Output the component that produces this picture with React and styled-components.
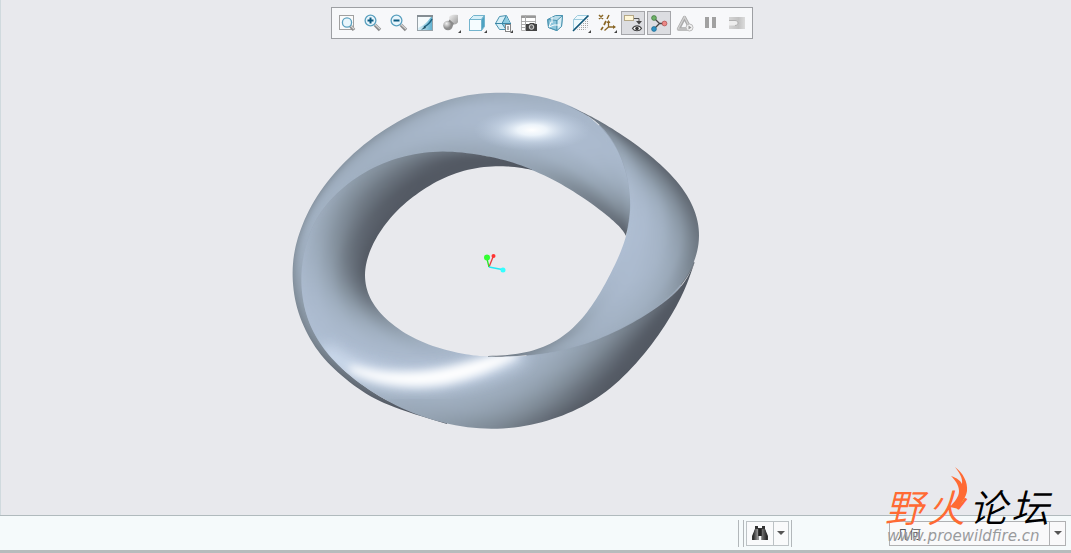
import React from "react";
import styled, { createGlobalStyle, css } from "styled-components";

const GlobalStyle = createGlobalStyle`
  * { box-sizing: border-box; }
  body {
    margin: 0;
    background: #e8eaee;
    font-family: "Liberation Sans", "Noto Sans CJK SC", sans-serif;
  }
`;

const Page = styled.div`
  position: relative;
  display: flex;
  flex-direction: column;
  min-height: 100vh;
  overflow: hidden;
`;

const Viewport = styled.main`
  flex: 1;
  display: flex;
  flex-direction: column;
  align-items: center;
  padding-top: 7px;
  border-left: 1px solid #d0dade;
  background: #e8e9ed;
`;

const Toolbar = styled.div`
  display: flex;
  gap: 2px;
  margin-left: 12px;
  padding: 3px;
  border: 1px solid #9d9fa3;
  background: #f7f8fa;
`;

const ToolButton = styled.button`
  display: block;
  width: 24px;
  height: 24px;
  padding: 0;
  border: 0;
  background: transparent;
  ${(p) =>
    p.$active &&
    css`
      background: #dcdde1;
      box-shadow: inset 0 0 0 1px #a5a6aa;
    `}
  svg { display: block; }
`;

const Scene = styled.svg`
  display: block;
  width: 100%;
  flex: 1;
  min-height: 0;
`;

const StatusBar = styled.footer`
  display: flex;
  align-items: center;
  justify-content: flex-end;
  height: 38px;
  padding: 0 5px 0 0;
  border-top: 1px solid #b0babd;
  border-bottom: 3px solid #b7bbbc;
  background: #f5fafb;
`;

const Divider = styled.span`
  width: 1px;
  height: 27px;
  margin-right: ${(p) => p.$gap || 2}px;
  background: #b2b7ba;
`;

const FindGroup = styled.div`
  display: flex;
  height: 25px;
  margin-right: 2px;
  border: 1px solid #bcc2c5;
  background: #f9fafb;
`;

const FindButton = styled.button`
  display: flex;
  align-items: center;
  justify-content: center;
  width: ${(p) => p.$width}px;
  padding: 0;
  border: 0;
  border-left: ${(p) => (p.$split ? "1px solid #bcc2c5" : "0")};
  background: transparent;
`;

const FilterBox = styled.div`
  display: flex;
  align-items: center;
  position: relative;
  width: 177px;
  height: 25px;
  margin-left: 95px;
  border: 1px solid #b0b1b3;
  background: #f9f9fa;
`;

const FilterSelect = styled.select`
  appearance: none;
  width: 100%;
  height: 23px;
  padding: 0 24px 0 7px;
  border: 0;
  background: transparent;
  color: #555;
  font: 12px "Noto Sans CJK SC", sans-serif;
`;

const FilterArrow = styled.span`
  position: absolute;
  top: 0;
  right: 0;
  display: flex;
  align-items: center;
  justify-content: center;
  width: 16px;
  height: 23px;
  border-left: 1px solid #b0b1b3;
  pointer-events: none;
`;

const Watermark = styled.div`
  position: absolute;
  right: 18px;
  bottom: 7px;
  width: 168px;
  pointer-events: none;
`;

const Brand = styled.div`
  display: flex;
  gap: 4px;
  color: #000;
  font: italic 350 38px/40px "Noto Sans CJK SC", sans-serif;
`;

const BrandFire = styled.span`
  position: relative;
  color: #ff6a33;
`;

const Flame = styled.svg`
  position: absolute;
  right: -3px;
  top: -19px;
  width: 18px;
  height: 43px;
`;

const SiteName = styled.div`
  margin-left: 2px;
  color: #999b9d;
  font: italic 15px/20px "DejaVu Sans", sans-serif;
`;

/* ---------- toolbar icons, each on a 24 x 24 grid ---------- */

const Corner = () => <path d="M22 19v3h-3z" fill="#444" />;

const Lens = ({ cx, cy, r, sign }) => (
  <>
    <path d={`M${cx + r - 1} ${cy + r - 1}L19 19`} stroke="#8b8b8b" strokeWidth="3.4" />
    <path d={`M${cx + r - 1} ${cy + r - 1.6}L19 18`} stroke="#d4d4d4" strokeWidth="1.2" />
    <circle cx={cx} cy={cy} r={r} fill="#e9f6fc" stroke="#5aa0bf" strokeWidth="1.3" />
    {sign && (
      <path
        d={sign === "+" ? `M${cx - 3} ${cy}h6M${cx} ${cy - 3}v6` : `M${cx - 3} ${cy}h6`}
        stroke="#0c5a80"
        strokeWidth="2"
      />
    )}
  </>
);

const icons = {
  refit: (
    <>
      <rect x="4.5" y="4.5" width="14" height="14" fill="#fbfbfb" stroke="#a0a0a0" />
      <Lens cx={12} cy={11.5} r={4.6} />
    </>
  ),
  zoomIn: <Lens cx={9.5} cy={9.5} r={5.4} sign="+" />,
  zoomOut: <Lens cx={9.5} cy={9.5} r={5.4} sign="-" />,
  repaint: (
    <>
      <rect x="4.5" y="4.5" width="15" height="15" fill="url(#teal)" stroke="#98a2a8" />
      <path d="M5 6h13C14 11 12 14 5 17z" fill="#f4fafc" />
      <path d="M4 5h16" stroke="#858d93" strokeWidth="2" />
      <path d="M19 8c-2 4-4 6-8 8" fill="none" stroke="#1d6483" strokeWidth="1.6" />
      <path d="M12 15l-4 4 5-2z" fill="#245468" />
    </>
  ),
  shading: (
    <>
      <path d="M10 6c2-3 7-2 9-2v7c-1 3-5 3-8 1z" fill="url(#metal)" />
      <circle cx="9" cy="14.5" r="4.8" fill="url(#ball)" />
      <path d="M10.500 8.500l4.500 4-1.500 3c0-2-1.500-4-4-5z" fill="#8a8a8a" />
      <Corner />
    </>
  ),
  views: (
    <>
      <path d="M4.5 8.5l4-4h11l-3 4z" fill="#d7f0f9" stroke="#74b4cd" />
      <path d="M16.5 8.5l3-4v11l-3 4z" fill="#4da2c2" stroke="#74b4cd" />
      <rect x="4.5" y="8.5" width="12" height="11" fill="#f5fcff" stroke="#74b4cd" />
      <Corner />
    </>
  ),
  manager: (
    <>
      <path d="M4.5 12.5l4-7 7-1 4 8-4 6h-7z" fill="#d6eff7" stroke="#4a93b0" />
      <path d="M15 5l-4 7 4 6 4-6z" fill="#8ccbe0" />
      <path d="M4 12.5h16M15 5l-4 7.500l4 6" fill="none" stroke="#3a86a6" />
      <rect x="14.500" y="13.500" width="5" height="7" fill="#fff" stroke="#858585" />
      <path d="M16 16h2M16 18h2" stroke="#555" />
      <Corner />
    </>
  ),
  capture: (
    <>
      <path d="M4.500 4.500h14v15h-14z" fill="#fff" stroke="#b5b5b5" />
      <path d="M4 5h15v2H4z" fill="#999" />
      <path d="M4 10.500h15M4 13.500h7M4 16.500h5M8.500 4v16" stroke="#aaa" />
      <path d="M9 13h3l1-1h4l1 1h2v7H9z" fill="#444" />
      <circle cx="14.500" cy="16" r="2.300" fill="#666" stroke="#ddd" />
    </>
  ),
  perspective: (
    <>
      <path d="M4.500 8.500l8-4h7l-1 11-5 4-8-3z" fill="#b9dce9" stroke="#4b94b1" />
      <path d="M5 8.500l9 1v10l-8.500-3z" fill="#8dc6dc" stroke="#4b94b1" />
      <path d="M14 9.500l5.500-5-1 11-4.500 4z" fill="#d9eff6" stroke="#4b94b1" />
      <path d="M8 11l-2 5 5-2h6M9 6v6" fill="none" stroke="#fff" />
    </>
  ),
  section: (
    <>
      <path d="M4.500 18.500v-10l4-4h10l-14 14z" fill="#edf9fd" stroke="#9fcbdd" />
      <path d="M4.500 8.500h10l4-4" fill="none" stroke="#9fcbdd" />
      <path d="M19 7v9l-4 4H7z" fill="url(#dots)" />
      <path d="M4 20L19.500 4.500" stroke="#135676" strokeWidth="1.600" />
      <Corner />
    </>
  ),
  datum: (
    <>
      <path d="M4 4l4 4M8 4l-4 4M14 4l-2 4" stroke="#8a6727" strokeWidth="1.500" />
      <path d="M11 10l-2 4M8 16l-2 3" stroke="#8a6727" strokeWidth="1.700" />
      <path d="M13.500 10v6h6M13.500 16l-4 3.500" fill="none" stroke="#8a6727" strokeWidth="1.300" />
      <path d="M11.500 12l2-3 2 3zM18 14l3 2-3 2z" fill="#8a6727" />
      <Corner />
    </>
  ),
  annotation: (
    <>
      <rect x="3.500" y="4.500" width="9" height="5" fill="#fff7d8" stroke="#b5a886" />
      <path d="M13 7.500h5v3" fill="none" stroke="#555" />
      <path d="M15 10h6l-3 3.500z" fill="#444" />
      <path d="M11.500 17.500c2-3.500 7-3.500 9 0-2 3-7 3-9 0z" fill="#fff" stroke="#444" strokeWidth="1.200" />
      <circle cx="16" cy="17.500" r="1.800" fill="#333" />
    </>
  ),
  spin: (
    <>
      <path d="M7 7l5.500 5.500L7 18M12.500 12.500H17" fill="none" stroke="#444" strokeWidth="1.300" />
      <circle cx="7" cy="7" r="2.400" fill="#6fb268" stroke="#39733a" strokeWidth=".7" />
      <circle cx="17.500" cy="12.500" r="2.400" fill="#ec8785" stroke="#a94b4b" strokeWidth=".7" />
      <circle cx="7" cy="18" r="2.400" fill="#2f93c4" stroke="#17648c" strokeWidth=".7" />
    </>
  ),
  simulate: (
    <>
      <path d="M11.500 6.500l6 11.500H5.500z" fill="none" stroke="#aaa" strokeWidth="3.400" strokeLinejoin="round" />
      <path d="M11.500 6l6 12H5z" fill="none" stroke="#d2d2d2" strokeWidth="1.200" />
      <circle cx="16.500" cy="16.500" r="3.500" fill="#f1f1f1" stroke="#bbb" />
      <path d="M15.500 14.500l3 2-3 2z" fill="#999" />
    </>
  ),
  pause: <path d="M6 6h4v11H6zM13 6h4v11h-4z" fill="#a1a1a1" />,
  resume: (
    <>
      <rect x="4" y="6" width="16" height="12" fill="url(#metalLight)" />
      <path d="M4 9.500h6c4 0 4 5 0 5H4z" fill="#eee" />
      <path d="M4 9.500h6c4 0 4 5 0 5" fill="none" stroke="#b0b0b0" />
    </>
  ),
};

const tools = [
  ["refit", "Refit"],
  ["zoomIn", "Zoom in"],
  ["zoomOut", "Zoom out"],
  ["repaint", "Repaint"],
  ["shading", "Display style"],
  ["views", "Saved orientations"],
  ["manager", "View manager"],
  ["capture", "Capture"],
  ["perspective", "Perspective"],
  ["section", "Section"],
  ["datum", "Datum display"],
  ["annotation", "Annotation display", true],
  ["spin", "Spin center", true],
  ["simulate", "Simulate"],
  ["pause", "Pause"],
  ["resume", "Resume"],
];

const PaintDefs = styled.svg`
  position: absolute;
`;

const IconPaints = () => (
  <PaintDefs width="0" height="0" aria-hidden="true">
    <defs>
      <linearGradient id="teal"><stop offset="0" stopColor="#e3f4fa" /><stop offset="1" stopColor="#5db0cf" /></linearGradient>
      <linearGradient id="metal" x2="1" y2="1"><stop offset="0" stopColor="#f2f2f2" /><stop offset="1" stopColor="#999" /></linearGradient>
      <linearGradient id="metalLight"><stop offset="0" stopColor="#d5d5d5" /><stop offset=".6" stopColor="#c2c2c2" /><stop offset="1" stopColor="#dcdcdc" /></linearGradient>
      <radialGradient id="ball" cx=".35" cy=".3"><stop offset="0" stopColor="#f2f2f2" /><stop offset="1" stopColor="#8d8d8d" /></radialGradient>
      <linearGradient id="barrel"><stop offset="0" stopColor="#222" /><stop offset=".4" stopColor="#aaa" /><stop offset="1" stopColor="#222" /></linearGradient>
      <pattern id="dots" width="2" height="2" patternUnits="userSpaceOnUse"><rect width="1" height="1" fill="#a5a5a5" /></pattern>
    </defs>
  </PaintDefs>
);

/* ---------- shaded ring ----------
   Each surface is a list of stations along the ring:
   [edge A x, y, edge B x, y, shade at five places from A to B].
   Shade 0 is the darkest tone and 1 the lit body tone. */

const topSurface = [
  [447, 424, 447, 423, 0, 0, 0, 0, 0],
  [397, 409, 400, 407, 0, 0, 0, 0, 0],
  [370, 397, 378, 396, 0, 0.1, 0.1, 0.2, 0.2],
  [346, 380, 354, 379, 0.1, 0.2, 0.3, 0.3, 0.4],
  [323, 359, 331, 359, 0.3, 0.35, 0.4, 0.45, 0.5],
  [307, 335, 315, 337, 0.4, 0.5, 0.55, 0.6, 0.6],
  [296, 308, 305, 313, 0.45, 0.55, 0.6, 0.65, 0.7],
  [292, 281, 301, 286, 0.5, 0.65, 0.7, 0.75, 0.8],
  [293, 255, 303, 259, 0.5, 0.7, 0.8, 0.85, 0.88],
  [300, 229, 309, 232, 0.5, 0.75, 0.85, 0.88, 0.9],
  [313, 201, 323, 207, 0.5, 0.75, 0.87, 0.9, 0.9],
  [334, 172, 344, 186, 0.55, 0.8, 0.87, 0.9, 0.9],
  [363, 144, 369, 169, 0.6, 0.83, 0.88, 0.9, 0.88],
  [397, 121, 396, 158, 0.65, 0.85, 0.92, 0.92, 0.87],
  [433, 104, 424, 152, 0.75, 0.92, 0.96, 0.93, 0.85],
  [468, 94, 452, 151, 0.8, 0.97, 0.98, 0.93, 0.82],
  [502, 92, 483, 155, 0.85, 0.98, 1, 0.93, 0.8],
  [530, 94, 514, 163, 0.87, 0.98, 1, 0.94, 0.8],
  [556, 100, 545, 175, 0.9, 1, 1, 0.92, 0.72],
  [581, 110, 570, 189, 0.94, 1, 1, 0.87, 0.55],
  [602, 127, 591, 203, 0.96, 1, 0.97, 0.8, 0.4],
  [619, 150, 608, 216, 1, 0.97, 0.88, 0.7, 0.3],
  [629, 181, 619, 226, 0.98, 0.88, 0.75, 0.55, 0.2],
  [631, 210, 624, 232, 0.75, 0.65, 0.5, 0.3, 0.1],
  [626, 236, 626, 236, 0.2, 0.2, 0.1, 0.1, 0.1],
];

const rightSurface = [
  [566, 105, 566, 105, 0.2, 0.2, 0.2, 0.2, 0.2],
  [585, 113, 584, 113, 0.2, 0.2, 0.2, 0.3, 0.3],
  [605, 124, 600, 124, 0.1, 0.2, 0.3, 0.4, 0.5],
  [627, 138, 613, 140, 0.1, 0.3, 0.45, 0.6, 0.7],
  [650, 155, 623, 160, 0.1, 0.35, 0.55, 0.75, 0.88],
  [671, 174, 629, 184, 0.1, 0.45, 0.7, 0.88, 1],
  [688, 195, 631, 208, 0.12, 0.55, 0.85, 0.98, 1.02],
  [698, 218, 628, 231, 0.2, 0.65, 0.9, 1, 1.03],
  [700, 240, 621, 252, 0.3, 0.73, 0.93, 1, 1.03],
  [695, 262, 612, 271, 0.4, 0.8, 0.95, 1, 1],
  [682, 285, 602, 290, 0.62, 0.85, 0.95, 1, 0.95],
  [659, 306, 590, 309, 0.8, 0.9, 0.94, 0.95, 0.88],
  [630, 324, 575, 327, 0.87, 0.9, 0.93, 0.9, 0.75],
  [598, 340, 557, 341, 0.88, 0.9, 0.88, 0.8, 0.65],
  [563, 351, 537, 350, 0.85, 0.83, 0.8, 0.7, 0.5],
  [527, 356, 514, 355, 0.65, 0.6, 0.55, 0.5, 0.4],
  [488, 357, 488, 356, 0.3, 0.3, 0.3, 0.3, 0.3],
];

const innerSurface = [
  [533, 170, 533, 170, 0, 0, 0, 0, 0],
  [510, 161, 511, 166, 0, 0, 0, 0, 0],
  [482, 155, 488, 166, 0.15, 0.05, 0, 0, 0],
  [452, 151, 464, 170, 0.4, 0.15, 0, 0, 0],
  [424, 152, 440, 179, 0.5, 0.25, 0.05, 0, 0],
  [396, 158, 419, 192, 0.6, 0.4, 0.18, 0, 0],
  [369, 169, 400, 207, 0.68, 0.5, 0.27, 0.05, 0],
  [344, 186, 385, 224, 0.77, 0.57, 0.35, 0.1, 0],
  [323, 207, 374, 241, 0.86, 0.68, 0.48, 0.18, 0],
  [309, 232, 367, 258, 0.9, 0.77, 0.57, 0.25, 0],
  [301, 264, 364, 275, 0.96, 0.88, 0.7, 0.38, 0.03],
  [301, 293, 367, 293, 1, 0.95, 0.82, 0.57, 0.22],
  [307, 320, 376, 309, 1.02, 0.99, 0.91, 0.75, 0.48],
  [320, 345, 391, 324, 1.03, 1, 0.97, 0.88, 0.68],
  [341, 369, 412, 338, 1.02, 1.01, 1, 0.95, 0.83],
  [368, 390, 437, 348, 0.9, 1, 1, 1, 0.92],
  [401, 409, 462, 354, 0.83, 0.9, 1, 1, 0.97],
  [437, 422, 485, 357, 0.75, 0.85, 0.92, 1, 1],
  [474, 429, 506, 357, 0.6, 0.77, 0.87, 0.94, 1],
  [509, 429, 530, 356, 0.45, 0.66, 0.8, 0.88, 0.93],
  [542, 423, 555, 352, 0.22, 0.5, 0.68, 0.8, 0.86],
  [573, 412, 581, 346, 0, 0.28, 0.5, 0.67, 0.77],
  [602, 396, 607, 336, 0, 0.05, 0.28, 0.48, 0.63],
  [628, 373, 633, 323, 0, 0, 0.06, 0.26, 0.45],
  [652, 345, 657, 308, 0, 0, 0, 0.06, 0.24],
  [672, 315, 676, 293, 0, 0, 0, 0, 0.08],
  [686, 288, 688, 278, 0, 0, 0, 0, 0],
  [695, 261, 695, 261, 0, 0, 0, 0, 0],
];

const tones = [
  [0, 84, 90, 100],
  [0.4, 113, 123, 134],
  [0.65, 136, 149, 162],
  [0.88, 160, 175, 192],
  [1, 172, 187, 207],
  [1.1, 181, 198, 219],
];

function toneAt(v) {
  const s = Math.max(0, Math.min(1.1, v));
  let i = 1;
  while (i < tones.length - 1 && s > tones[i][0]) i++;
  const [a, b] = [tones[i - 1], tones[i]];
  const t = (s - a[0]) / (b[0] - a[0]);
  return `rgb(${[1, 2, 3].map((k) => Math.round(a[k] + (b[k] - a[k]) * t)).join()})`;
}

/* Uniform cubic B-spline through a run of four control values. */
function spline(p0, p1, p2, p3, t) {
  const s = 1 - t;
  return (
    (s * s * s * p0 +
      (3 * t * t * t - 6 * t * t + 4) * p1 +
      (3 * s * s * s - 6 * s * s + 4) * p2 +
      t * t * t * p3) / 6
  );
}

function smooth(stations, steps) {
  const last = stations.length - 1;
  const mirror = (a, b) => a.map((v, k) => 2 * v - b[k]);
  const at = (i) => {
    if (i < 0) return mirror(stations[0], stations[1]);
    if (i > last) return mirror(stations[last], stations[last - 1]);
    return stations[i];
  };
  const rows = [];
  for (let i = 0; i < last; i++) {
    for (let s = 0; s < steps; s++) {
      rows.push(at(i).map((_, k) => spline(at(i - 1)[k], at(i)[k], at(i + 1)[k], at(i + 2)[k], s / steps)));
    }
  }
  rows.push(at(last));
  return rows;
}

const outline = (rows) =>
  "M" +
  rows.map((r) => `${r[0]} ${r[1]}`).join("L") +
  "L" +
  [...rows].reverse().map((r) => `${r[2]} ${r[3]}`).join("L") +
  "Z";

const STEPS = 6;

/* One edge of a surface, as a path between two stations. */
function edge(stations, side, from, to) {
  return (
    "M" +
    smooth(stations, STEPS)
      .slice(from * STEPS, to * STEPS + 1)
      .map((r) => `${r[side]} ${r[side + 1]}`)
      .join("L")
  );
}

function Surface({ stations, id, children }) {
  const rows = smooth(stations, STEPS);
  const cols = 18;
  const quads = [];
  const point = (r, u) => `${(r[0] + (r[2] - r[0]) * u).toFixed(2)},${(r[1] + (r[3] - r[1]) * u).toFixed(2)}`;
  const shade = (r, u) => {
    const f = u * 4;
    const i = Math.min(3, Math.floor(f));
    return r[4 + i] + (r[5 + i] - r[4 + i]) * (f - i);
  };
  for (let i = 0; i < rows.length - 1; i++) {
    for (let j = 0; j < cols; j++) {
      const [a, b] = [rows[i], rows[i + 1]];
      const [u, v] = [j / cols, (j + 1) / cols];
      const tone = toneAt((shade(a, (u + v) / 2) + shade(b, (u + v) / 2)) / 2);
      quads.push(
        <polygon
          key={`${i}-${j}`}
          points={`${point(a, u)} ${point(a, v)} ${point(b, v)} ${point(b, u)}`}
          fill={tone}
          stroke={tone}
        />
      );
    }
  }
  return (
    <g>
      <clipPath id={id}><path d={outline(rows)} /></clipPath>
      <g clipPath={`url(#${id})`}>
        <g filter="url(#blend)" strokeWidth="2">{quads}</g>
        {children}
      </g>
    </g>
  );
}

function Ring() {
  return (
    <Scene viewBox="1 39 1070 476" role="img" aria-label="Twisted ring model">
      <defs>
        <radialGradient id="spot">
          <stop offset="0" stopColor="#fff" />
          <stop offset=".25" stopColor="#f4faff" stopOpacity=".9" />
          <stop offset=".6" stopColor="#dce9f8" stopOpacity=".4" />
          <stop offset="1" stopColor="#c4d3e6" stopOpacity="0" />
        </radialGradient>
        <filter id="blend" colorInterpolationFilters="sRGB">
          <feGaussianBlur in="SourceGraphic" stdDeviation="2" result="even" />
          <feMerge>
            <feMergeNode in="SourceGraphic" />
            <feMergeNode in="even" />
          </feMerge>
        </filter>
        <filter id="soft" x="-20%" y="-60%" width="140%" height="220%"><feGaussianBlur stdDeviation="4" /></filter>
        <filter id="wide" x="-20%" y="-60%" width="140%" height="220%"><feGaussianBlur stdDeviation="8" /></filter>
      </defs>
      <g fill="none" stroke="#9aa8b9" strokeWidth="3">
        <path d={edge(rightSurface, 2, 2, 7)} />
        <path d={edge(innerSurface, 0, 2, 14)} />
        <path d={edge(rightSurface, 0, 10, 15)} />
      </g>
      <path d={edge(rightSurface, 0, 9, 10)} fill="none" stroke="#707983" strokeWidth="2" />
      <Surface stations={topSurface} id="top">
        <ellipse cx="532" cy="130" rx="58" ry="21" fill="url(#spot)" />
      </Surface>
      <Surface stations={rightSurface} id="right" />
      <Surface stations={innerSurface} id="inner">
        <path d="M322 350C350 372 388 382 425 380C462 377 492 368 522 352" fill="none" stroke="#dbe8fa" strokeWidth="18" opacity=".75" filter="url(#wide)" />
        <path d="M350 368C380 384 415 386 445 381C475 375 498 365 516 354C490 358 470 366 440 372C410 377 380 377 350 368Z" fill="#fff" stroke="#fff" strokeWidth="6" filter="url(#soft)" />
      </Surface>
      <path d="M489 267L493 257" stroke="#e83a3a" strokeWidth="1.300" />
      <path d="M489 267L487 259" stroke="#24e824" strokeWidth="1.300" />
      <path d="M489 267L502 269.500" stroke="#22eaf5" strokeWidth="1.300" />
      <circle cx="487" cy="257.500" r="3" fill="#33ff33" />
      <circle cx="493.500" cy="256" r="2" fill="#ff3333" />
      <circle cx="503" cy="270" r="2.500" fill="#33ffff" />
    </Scene>
  );
}

const DownArrow = () => (
  <svg width="8" height="4" viewBox="0 0 8 4" aria-hidden="true"><path d="M0 0h8L4 4z" fill="#555" /></svg>
);

export default function App() {
  return (
    <Page>
      <GlobalStyle />
      <IconPaints />
      <Viewport>
        <Toolbar role="toolbar" aria-label="Graphics">
          {tools.map(([name, label, active]) => (
            <ToolButton key={name} type="button" aria-label={label} aria-pressed={active} $active={active}>
              <svg width="24" height="24" viewBox="0 0 24 24" fill="none">{icons[name]}</svg>
            </ToolButton>
          ))}
        </Toolbar>
        <Ring />
      </Viewport>
      <StatusBar>
        <Divider $gap={4} />
        <Divider />
        <FindGroup>
          <FindButton type="button" aria-label="Find" $width={26}>
            <svg width="16" height="16" viewBox="0 0 16 16" aria-hidden="true">
              <path d="M3 1h3v2h4V1h3v3l3 7v4H9.500v-4h-3v4H0v-4l3-7z" fill="#333" />
              <path d="M3 4h3v11H1v-4zM10 4h3l2 7v4h-5z" fill="url(#barrel)" />
              <path d="M7 4h2v7H7z" fill="#222" />
            </svg>
          </FindButton>
          <FindButton type="button" aria-label="Find options" $width={15} $split>
            <DownArrow />
          </FindButton>
        </FindGroup>
        <Divider />
        <FilterBox>
          <FilterSelect aria-label="Selection filter" defaultValue="geometry">
            <option value="geometry">几何</option>
          </FilterSelect>
          <FilterArrow><DownArrow /></FilterArrow>
        </FilterBox>
      </StatusBar>
      <Watermark>
        <Brand>
          <BrandFire>野</BrandFire>
          <BrandFire>
            火
            <Flame viewBox="0 0 18 43" aria-hidden="true">
              <path d="M5 0C13 6 18 15 17 24C16 31 11 35 9 42L0 40C5 34 9 30 9 24C9 18 5 13 1 9C7 11 11 14 12 17C13 11 9 5 5 0Z" fill="#ff6a33" />
            </Flame>
          </BrandFire>
          <span>论</span>
          <span>坛</span>
        </Brand>
        <SiteName>www.proewildfire.cn</SiteName>
      </Watermark>
    </Page>
  );
}
